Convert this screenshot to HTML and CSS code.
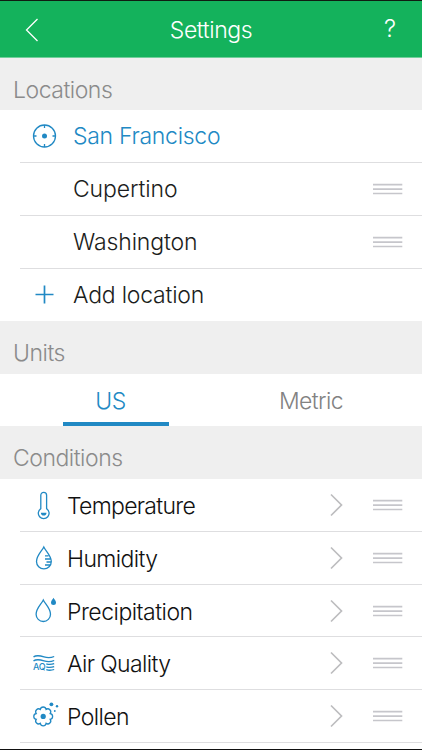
FILE: index.html
```
<!DOCTYPE html>
<html lang="en">
<head>
<meta charset="utf-8">
<title>Settings</title>
<link rel="stylesheet" href="styles.css">
</head>
<body>
<svg class="defs" width="0" height="0">
  <symbol id="grip" viewBox="0 0 30 12"><path d="M0 1.700h29.300M0 6.100h29.300M0 10.500h29.300"/></symbol>
  <symbol id="chevron" viewBox="0 0 13 24"><path d="M1 1.500 11.500 12 1 22.500"/></symbol>
</svg>
<div class="screen">
  <header class="bar">
    <svg class="back" viewBox="0 0 14 24"><path d="M12.500 1 1.500 12 12.500 23"/></svg>
    <h1 class="title">Settings</h1>
    <span class="help">?</span>
  </header>

  <h2 class="section">Locations</h2>
  <ul class="list places">
    <li class="row">
      <svg class="icon" viewBox="0 0 36 36"><circle cx="18.500" cy="18" r="11"/><path d="M18.500 7v3M18.500 26v3M7.500 18h3M26.500 18h3"/><circle class="fill" cx="18.500" cy="18" r="2.500"/></svg>
      <span class="label current">San Francisco</span>
    </li>
    <li class="row"><span class="icon"></span><span class="label">Cupertino</span><svg class="grip"><use href="#grip"/></svg></li>
    <li class="row"><span class="icon"></span><span class="label">Washington</span><svg class="grip"><use href="#grip"/></svg></li>
    <li class="row short last">
      <svg class="icon plus" viewBox="0 0 36 36"><path d="M9.500 17.500h18M18.500 8.500v18"/></svg>
      <span class="label add">Add location</span>
    </li>
  </ul>

  <h2 class="section">Units</h2>
  <div class="tabs">
    <div class="tab active">US</div>
    <div class="tab">Metric</div>
  </div>

  <h2 class="section">Conditions</h2>
  <ul class="list conditions">
    <li class="row">
      <svg class="icon" viewBox="0 0 36 36"><path d="M14.800 21.700V8.200a2.900 2.900 0 0 1 5.800 0V21.700a5.400 5.400 0 1 1-5.800 0Z"/><path class="fill" d="M14.900 25.800h5.600a2.800 2.800 0 0 1-5.600 0Z"/></svg>
      <span class="label temperature">Temperature</span><svg class="chevron"><use href="#chevron"/></svg><svg class="grip"><use href="#grip"/></svg>
    </li>
    <li class="row">
      <svg class="icon" viewBox="0 0 36 36"><path d="M17.800 7C16 11 10.500 15.500 10.500 21.500a7.400 7.400 0 0 0 14.800 0C25.300 15.500 19.600 11 17.800 7ZM19 15.800h3.500M19 19h5.500M20.500 22h4.500M19 25h5"/></svg>
      <span class="label">Humidity</span><svg class="chevron"><use href="#chevron"/></svg><svg class="grip"><use href="#grip"/></svg>
    </li>
    <li class="row short">
      <svg class="icon" viewBox="0 0 36 36"><path d="M17.300 7C15.500 11 10.100 15.300 10.100 21.300a7.200 7.200 0 0 0 14.400 0C24.500 15.300 19.100 11 17.300 7Z"/><path class="fill" d="M27.500 4.700c-.8 1.700-2.500 2.900-2.500 4.700a2.500 2.500 0 0 0 5 0c0-1.800-1.700-3-2.500-4.700Z"/></svg>
      <span class="label precipitation">Precipitation</span><svg class="chevron"><use href="#chevron"/></svg><svg class="grip"><use href="#grip"/></svg>
    </li>
    <li class="row">
      <svg class="icon" viewBox="0 0 36 36"><path d="M7.500 11.900c3-2 6-1.500 10.500 0s7 1 10.200-.4M7.500 15.900c3-2 6-1.500 10.500 0s7 1 10.200-.4M20.300 18.900c3 1 5 .8 7.900-.2M20.300 21.900c3 1 5 .8 7.900-.2M20.300 24.700c3 1 5 .8 7.900-.2"/><text class="aq" x="6.900" y="25.400">AQ</text></svg>
      <span class="label">Air Quality</span><svg class="chevron"><use href="#chevron"/></svg><svg class="grip"><use href="#grip"/></svg>
    </li>
    <li class="row">
      <svg class="icon" viewBox="0 0 36 36"><path d="M14.300 11.400a2.950 2.950 0 0 1 5.800 0a2.950 2.950 0 0 1 4.100 4.100a2.950 2.950 0 0 1 0 5.800a2.950 2.950 0 0 1-4.100 4.100a2.950 2.950 0 0 1-5.800 0a2.950 2.950 0 0 1-4.100-4.100a2.950 2.950 0 0 1 0-5.800a2.950 2.950 0 0 1 4.100-4.100Z"/><circle class="fill" cx="17.200" cy="18.400" r="2.600"/><circle class="fill" cx="25.400" cy="6.300" r="1.900"/><circle class="fill" cx="31" cy="8.200" r="1.200"/><circle class="fill" cx="28.800" cy="13" r=".9"/></svg>
      <span class="label">Pollen</span><svg class="chevron"><use href="#chevron"/></svg><svg class="grip"><use href="#grip"/></svg>
    </li>
  </ul>
</div>
</body>
</html>
```
FILE: styles.css
```
* { box-sizing: border-box; }
body { margin: 0; background: #fff; font-family: Inter, "Liberation Sans", sans-serif; font-weight: 300; font-size: 23px; color: #1b1d20; }
.defs { position: absolute; }
svg { fill: none; flex: none; }
.screen { height: 750px; overflow: hidden; border-top: 1px solid #101c12; border-bottom: 1px solid #111; }
.bar { height: 57px; background: #14b25c; border-bottom: 1px solid #72cf9b; display: grid; grid-template-columns: 60px 1fr 60px; align-items: center; color: #fff; }
.title { margin: 0; font: inherit; text-align: center; letter-spacing: -.4px; line-height: 56px; padding-top: 1px; }
.back { width: 14px; height: 24px; margin: 0 0 0 25px; stroke: #fff; stroke-width: 1.3; }
.help { padding: 0 0 2px 22px; font-size: 24px; }
.section { margin: 0; height: 52px; padding: 5px 0 0 13px; background: #efefef; font: inherit; line-height: 55px; letter-spacing: -.48px; color: #8b8b8b; }
.list { margin: 0; padding: 0; list-style: none; }
.list + .section, .tabs + .section { height: 53px; }
.row { height: 53px; margin-left: 20px; display: flex; align-items: center; border-bottom: 1px solid #dedee0; }
.row.short { height: 52px; }
.row.last { border-bottom: 0; }
.icon { width: 36px; height: 36px; margin-left: 6px; stroke: #2189c4; stroke-width: 1.3; }
.plus { stroke-width: 1.7; }
.fill { fill: #2189c4; stroke: none; }
.aq { fill: #2189c4; stroke: none; font: 500 9px Inter, sans-serif; letter-spacing: -.2px; }
.label { flex: 1; white-space: nowrap; }
.places .label { padding-left: 11px; letter-spacing: -.12px; }
.places .current { color: #2189c4; letter-spacing: -.28px; }
.places .add { letter-spacing: -.22px; }
.conditions .label { padding: 2px 0 0 5px; letter-spacing: -.62px; color: #111; }
.conditions .temperature { letter-spacing: -.72px; }
.conditions .precipitation { letter-spacing: -.5px; }
.grip { width: 30px; height: 12px; margin: 0 19.5px 0 30px; stroke: #c6c6cb; stroke-width: 1.7; }
.chevron { width: 13px; height: 24px; stroke: #bdbdbf; stroke-width: 1.7; }
.tabs { height: 52px; display: flex; justify-content: space-between; padding: 0 58px 0 63px; background: #fff; }
.tab { width: 106px; line-height: 54px; text-align: center; letter-spacing: -.6px; color: #828282; }
.tab.active { padding-right: 11px; color: #2189c4; border-bottom: 4px solid #2189c4; }
```
